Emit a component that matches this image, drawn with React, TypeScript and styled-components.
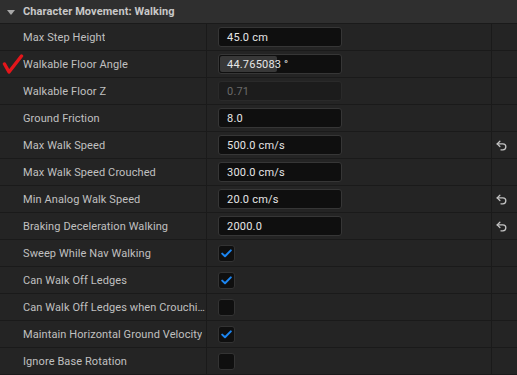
import React from "react";
import styled, { createGlobalStyle } from "styled-components";

const GlobalStyle = createGlobalStyle`
  html, body {
    margin: 0;
    padding: 0;
    background: #242424;
  }
  body {
    font-family: Roboto, "Noto Sans", sans-serif;
    -webkit-font-smoothing: antialiased;
  }
`;

type Prop = {
  label: string;
  value?: string;
  check?: boolean;
  disabled?: boolean;
  slider?: number;
  reset?: boolean;
  marked?: boolean;
};

const PROPS: Prop[] = [
  { label: "Max Step Height", value: "45.0 cm" },
  { label: "Walkable Floor Angle", value: "44.765083 °", slider: 57, marked: true },
  { label: "Walkable Floor Z", value: "0.71", disabled: true },
  { label: "Ground Friction", value: "8.0" },
  { label: "Max Walk Speed", value: "500.0 cm/s", reset: true },
  { label: "Max Walk Speed Crouched", value: "300.0 cm/s" },
  { label: "Min Analog Walk Speed", value: "20.0 cm/s", reset: true },
  { label: "Braking Deceleration Walking", value: "2000.0", reset: true },
  { label: "Sweep While Nav Walking", check: true },
  { label: "Can Walk Off Ledges", check: true },
  { label: "Can Walk Off Ledges when Crouching", check: false },
  { label: "Maintain Horizontal Ground Velocity", check: true },
  { label: "Ignore Base Rotation", check: false },
];

const Panel = styled.div`
  width: 517px;
  height: 375px;
  overflow: hidden;
  background: #242424;
`;

const Header = styled.div`
  height: 23px;
  border-bottom: 1px solid #1a1a1a;
  background: #2f2f2f;
  display: flex;
  align-items: center;
  padding-left: 7px;
  gap: 8px;
`;

const Arrow = styled.div`
  width: 0;
  height: 0;
  border-left: 4px solid transparent;
  border-right: 4px solid transparent;
  border-top: 5px solid #a8a8a8;
  margin-top: 1px;
`;

const Title = styled.div`
  font-size: 11px;
  font-weight: 700;
  color: #c8c8c8;
  letter-spacing: 0.1px;
`;

const Row = styled.div`
  height: 26px;
  border-bottom: 1px solid #1a1a1a;
  display: grid;
  grid-template-columns: 207px 285px 1fr;
`;

const NameCell = styled.div`
  position: relative;
  border-right: 1px solid #1a1a1a;
  display: flex;
  align-items: center;
  padding: 0 1px 0 23px;
  min-width: 0;
`;

const Label = styled.span`
  font-size: 11px;
  color: #c0c0c0;
  letter-spacing: 0.1px;
  white-space: nowrap;
  overflow: hidden;
  text-overflow: ellipsis;
`;

const ValueCell = styled.div`
  border-right: 1px solid #1a1a1a;
  display: flex;
  align-items: center;
  padding-left: 11px;
`;

const ResetCell = styled.div`
  display: flex;
  align-items: center;
  padding-left: 3px;
  color: #c4c4c4;
`;

const Input = styled.div<{ $disabled?: boolean }>`
  position: relative;
  box-sizing: border-box;
  width: 124px;
  height: 20px;
  border-radius: 3px;
  border: 1px solid ${(p) => (p.$disabled ? "#2a2a2a" : "#363636")};
  background: ${(p) => (p.$disabled ? "#1c1c1c" : "#0f0f0f")};
  display: flex;
  align-items: center;
  padding-left: 8px;
  overflow: hidden;
`;

const SliderFill = styled.div`
  position: absolute;
  left: 1px;
  top: 1px;
  bottom: 1px;
  border-radius: 2px;
  background: #383838;
`;

const InputText = styled.span<{ $disabled?: boolean }>`
  position: relative;
  font-size: 11px;
  letter-spacing: 0.2px;
  color: ${(p) => (p.$disabled ? "#6a6a6a" : "#e6e6e6")};
`;

const CheckBox = styled.div`
  box-sizing: border-box;
  width: 17px;
  height: 17px;
  border-radius: 3px;
  border: 1px solid #333333;
  background: #0f0f0f;
  display: flex;
  align-items: center;
  justify-content: center;
`;

const Mark = styled.svg`
  position: absolute;
  left: 2px;
  top: 3px;
`;

const RedCheck = () => (
  <Mark width="22" height="20" viewBox="0 0 22 20">
    <path
      d="M2.5 10 L7 18 L19.5 2"
      fill="none"
      stroke="#e3161b"
      strokeWidth="3.4"
      strokeLinecap="round"
      strokeLinejoin="round"
    />
  </Mark>
);

const Tick = () => (
  <svg width="11" height="9" viewBox="0 0 11 9">
    <path
      d="M1.2 4.6 L4 7.3 L9.8 1.4"
      fill="none"
      stroke="#1c86f2"
      strokeWidth="2"
      strokeLinecap="round"
      strokeLinejoin="round"
    />
  </svg>
);

const ResetIcon = () => (
  <svg width="13" height="13" viewBox="0 0 24 24" fill="none" stroke="currentColor" strokeWidth="2.4" strokeLinecap="round" strokeLinejoin="round">
    <path d="M9 14 4 9l5-5" />
    <path d="M4 9h10.5a5.5 5.5 0 0 1 5.5 5.5a5.5 5.5 0 0 1-5.5 5.5H11" />
  </svg>
);

const App = () => {
  return (
    <Panel>
      <GlobalStyle />
      <Header>
        <Arrow />
        <Title>Character Movement: Walking</Title>
      </Header>
      {PROPS.map((p) => (
        <Row key={p.label}>
          <NameCell>
            {p.marked && <RedCheck />}
            <Label>{p.label}</Label>
          </NameCell>
          <ValueCell>
            {p.check !== undefined ? (
              <CheckBox>{p.check && <Tick />}</CheckBox>
            ) : (
              <Input $disabled={p.disabled}>
                {p.slider && <SliderFill style={{ width: p.slider }} />}
                <InputText $disabled={p.disabled}>{p.value}</InputText>
              </Input>
            )}
          </ValueCell>
          <ResetCell>{p.reset && <ResetIcon />}</ResetCell>
        </Row>
      ))}
    </Panel>
  );
};

export default App;
